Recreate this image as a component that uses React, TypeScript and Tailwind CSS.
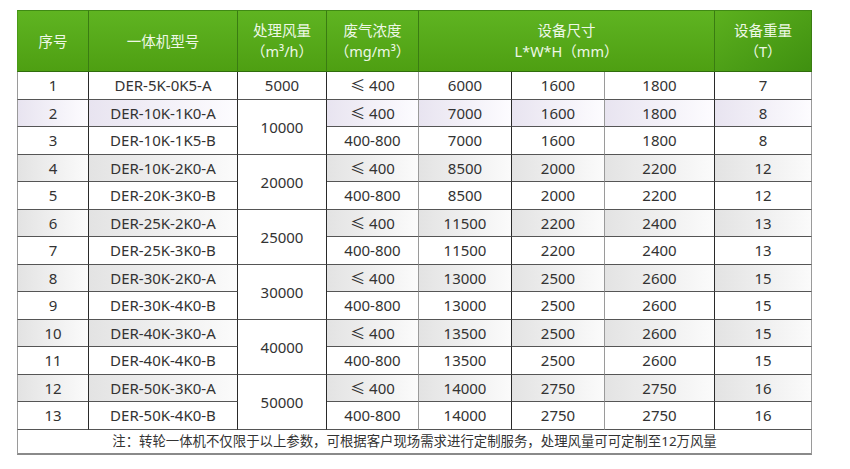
import React from "react";

type Row = {
  n: string;
  model: string;
  air?: string;
  span?: number;
  conc: string;
  l: string;
  w: string;
  h: string;
  t: string;
  shade: "white" | "gray" | "lav";
};

const rows: Row[] = [
  { n: "1", model: "DER-5K-0K5-A", air: "5000", span: 1, conc: "≤ 400", l: "6000", w: "1600", h: "1800", t: "7", shade: "white" },
  { n: "2", model: "DER-10K-1K0-A", air: "10000", span: 2, conc: "≤ 400", l: "7000", w: "1600", h: "1800", t: "8", shade: "lav" },
  { n: "3", model: "DER-10K-1K5-B", conc: "400-800", l: "7000", w: "1600", h: "1800", t: "8", shade: "white" },
  { n: "4", model: "DER-10K-2K0-A", air: "20000", span: 2, conc: "≤ 400", l: "8500", w: "2000", h: "2200", t: "12", shade: "gray" },
  { n: "5", model: "DER-20K-3K0-B", conc: "400-800", l: "8500", w: "2000", h: "2200", t: "12", shade: "white" },
  { n: "6", model: "DER-25K-2K0-A", air: "25000", span: 2, conc: "≤ 400", l: "11500", w: "2200", h: "2400", t: "13", shade: "gray" },
  { n: "7", model: "DER-25K-3K0-B", conc: "400-800", l: "11500", w: "2200", h: "2400", t: "13", shade: "white" },
  { n: "8", model: "DER-30K-2K0-A", air: "30000", span: 2, conc: "≤ 400", l: "13000", w: "2500", h: "2600", t: "15", shade: "gray" },
  { n: "9", model: "DER-30K-4K0-B", conc: "400-800", l: "13000", w: "2500", h: "2600", t: "15", shade: "white" },
  { n: "10", model: "DER-40K-3K0-A", air: "40000", span: 2, conc: "≤ 400", l: "13500", w: "2500", h: "2600", t: "15", shade: "gray" },
  { n: "11", model: "DER-40K-4K0-B", conc: "400-800", l: "13500", w: "2500", h: "2600", t: "15", shade: "white" },
  { n: "12", model: "DER-50K-3K0-A", air: "50000", span: 2, conc: "≤ 400", l: "14000", w: "2750", h: "2750", t: "16", shade: "gray" },
  { n: "13", model: "DER-50K-4K0-B", conc: "400-800", l: "14000", w: "2750", h: "2750", t: "16", shade: "white" },
];

const shadeCls = (s: Row["shade"]) =>
  s === "gray"
    ? "bg-gradient-to-r from-[#e3e3e3] to-[#fbfbfb]"
    : s === "lav"
    ? "bg-gradient-to-r from-[#e8e4f0] to-[#fdfcff]"
    : "bg-white";

const dark = "border-r border-r-[#2a2a2a]";
const light = "border-r border-r-[#9a9a9a]";
const thBase =
  "font-normal bg-gradient-to-b from-[#5fb421] to-[#4e9f12] border-t border-t-[#3f8a14] border-b border-b-[#2f6d0c] border-r border-r-[#3a7c12]";

export default function App() {
  return (
    <div
      className="w-[850px] h-[469px] bg-white pt-[10px] pl-[17px]"
      style={{ fontFamily: '"Noto Sans", "Noto Sans CJK SC", sans-serif' }}
    >
      <table className="table-fixed border-separate border-spacing-0 w-[795px] text-[#333] text-[15px]">
        <colgroup>
          <col className="w-[72px]" />
          <col className="w-[149px]" />
          <col className="w-[89px]" />
          <col className="w-[92px]" />
          <col className="w-[93px]" />
          <col className="w-[93px]" />
          <col className="w-[110px]" />
          <col className="w-[97px]" />
        </colgroup>
        <thead>
          <tr className="h-[62px] text-[#eef8e6] text-[14.5px] leading-[21px]">
            <th className={`${thBase} border-l border-l-[#4a9a18]`}>序号</th>
            <th className={thBase}>一体机型号</th>
            <th className={thBase}>
              处理风量
              <br />
              （m³/h）
            </th>
            <th className={thBase}>
              废气浓度
              <br />
              （mg/m³）
            </th>
            <th colSpan={3} className={`${thBase} border-r-[#2f6d0c]`}>
              设备尺寸
              <br />
              L*W*H（mm）
            </th>
            <th className="font-normal bg-gradient-to-br from-[#5cb01e] to-[#3f9010] border-t border-t-[#3f8a14] border-b border-b-[#2f6d0c] border-r border-r-[#3a7c12]">
              设备重量
              <br />
              （T）
            </th>
          </tr>
        </thead>
        <tbody>
          {rows.map((r, i) => {
            const h = i % 2 === 0 ? "h-[28px]" : "h-[27px]";
            const sc = shadeCls(r.shade);
            const bb = "border-b border-b-[#555]";
            return (
              <tr key={r.n} className={`${h} text-center leading-none`}>
                <td className={`${sc} ${bb} ${dark} border-l border-l-[#9a9a9a]`}>{r.n}</td>
                <td className={`${sc} ${bb} ${dark}`}>{r.model}</td>
                {r.air !== undefined && (
                  <td rowSpan={r.span} className={`bg-white ${bb} ${dark}`}>
                    {r.air}
                  </td>
                )}
                <td className={`${sc} ${bb} ${light}`}>{r.conc}</td>
                <td className={`${sc} ${bb} ${dark}`}>{r.l}</td>
                <td className={`${sc} ${bb} ${light}`}>{r.w}</td>
                <td className={`${sc} ${bb} ${dark}`}>{r.h}</td>
                <td className={`${sc} ${bb} border-r border-r-[#9a9a9a]`}>{r.t}</td>
              </tr>
            );
          })}
          <tr className="h-[25px]">
            <td
              colSpan={8}
              className="text-center text-[13.4px] leading-none bg-white border-l border-l-[#9a9a9a] border-r border-r-[#9a9a9a] border-b-2 border-b-[#8a8a8a]"
            >
              注：转轮一体机不仅限于以上参数，可根据客户现场需求进行定制服务，处理风量可可定制至12万风量
            </td>
          </tr>
        </tbody>
      </table>
    </div>
  );
}
